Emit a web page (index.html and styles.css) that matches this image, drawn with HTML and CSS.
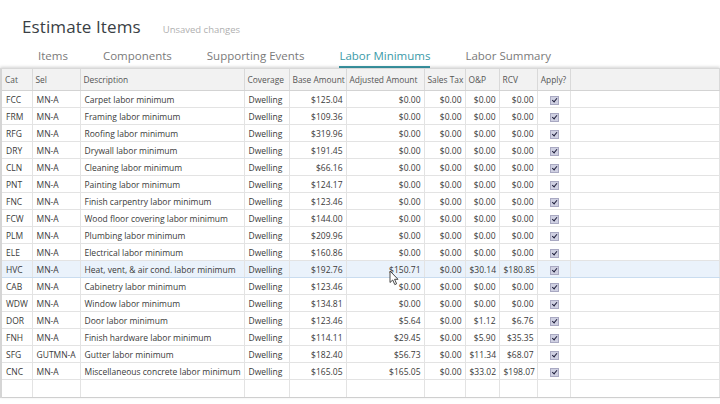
FILE: index.html
```html
<!DOCTYPE html>
<html lang="en">
<head>
    <meta charset="UTF-8" />
    <title>Estimate Items</title>
    <link rel="stylesheet" href="styles.css">
</head>
<body>

<header class="top">
    <h1>Estimate Items</h1>
    <span class="unsaved">Unsaved changes</span>
</header>

<nav class="tabs">
    <a>Items</a>
    <a>Components</a>
    <a>Supporting Events</a>
    <a class="active">Labor Minimums</a>
    <a>Labor Summary</a>
</nav>

<div class="grid-wrap">
    <table class="grid">
        <colgroup>
            <col style="width:31px">
            <col style="width:48px">
            <col style="width:164px">
            <col style="width:45px">
            <col style="width:57px">
            <col style="width:78px">
            <col style="width:41px">
            <col style="width:34px">
            <col style="width:38px">
            <col style="width:33px">
            <col>
        </colgroup>
        <tr>
            <th>Cat</th>
            <th>Sel</th>
            <th>Description</th>
            <th>Coverage</th>
            <th>Base Amount</th>
            <th>Adjusted Amount</th>
            <th>Sales Tax</th>
            <th>O&amp;P</th>
            <th>RCV</th>
            <th class="c">Apply?</th>
            <th></th>
        </tr>
        <tr><td>FCC</td><td>MN-A</td><td>Carpet labor minimum</td><td>Dwelling</td><td class="n">$125.04</td><td class="n">$0.00</td><td class="n">$0.00</td><td class="n">$0.00</td><td class="n">$0.00</td><td class="c"><span class="chk"></span></td><td></td></tr>
        <tr><td>FRM</td><td>MN-A</td><td>Framing labor minimum</td><td>Dwelling</td><td class="n">$109.36</td><td class="n">$0.00</td><td class="n">$0.00</td><td class="n">$0.00</td><td class="n">$0.00</td><td class="c"><span class="chk"></span></td><td></td></tr>
        <tr><td>RFG</td><td>MN-A</td><td>Roofing labor minimum</td><td>Dwelling</td><td class="n">$319.96</td><td class="n">$0.00</td><td class="n">$0.00</td><td class="n">$0.00</td><td class="n">$0.00</td><td class="c"><span class="chk"></span></td><td></td></tr>
        <tr><td>DRY</td><td>MN-A</td><td>Drywall labor minimum</td><td>Dwelling</td><td class="n">$191.45</td><td class="n">$0.00</td><td class="n">$0.00</td><td class="n">$0.00</td><td class="n">$0.00</td><td class="c"><span class="chk"></span></td><td></td></tr>
        <tr><td>CLN</td><td>MN-A</td><td>Cleaning labor minimum</td><td>Dwelling</td><td class="n">$66.16</td><td class="n">$0.00</td><td class="n">$0.00</td><td class="n">$0.00</td><td class="n">$0.00</td><td class="c"><span class="chk"></span></td><td></td></tr>
        <tr><td>PNT</td><td>MN-A</td><td>Painting labor minimum</td><td>Dwelling</td><td class="n">$124.17</td><td class="n">$0.00</td><td class="n">$0.00</td><td class="n">$0.00</td><td class="n">$0.00</td><td class="c"><span class="chk"></span></td><td></td></tr>
        <tr><td>FNC</td><td>MN-A</td><td>Finish carpentry labor minimum</td><td>Dwelling</td><td class="n">$123.46</td><td class="n">$0.00</td><td class="n">$0.00</td><td class="n">$0.00</td><td class="n">$0.00</td><td class="c"><span class="chk"></span></td><td></td></tr>
        <tr><td>FCW</td><td>MN-A</td><td>Wood floor covering labor minimum</td><td>Dwelling</td><td class="n">$144.00</td><td class="n">$0.00</td><td class="n">$0.00</td><td class="n">$0.00</td><td class="n">$0.00</td><td class="c"><span class="chk"></span></td><td></td></tr>
        <tr><td>PLM</td><td>MN-A</td><td>Plumbing labor minimum</td><td>Dwelling</td><td class="n">$209.96</td><td class="n">$0.00</td><td class="n">$0.00</td><td class="n">$0.00</td><td class="n">$0.00</td><td class="c"><span class="chk"></span></td><td></td></tr>
        <tr><td>ELE</td><td>MN-A</td><td>Electrical labor minimum</td><td>Dwelling</td><td class="n">$160.86</td><td class="n">$0.00</td><td class="n">$0.00</td><td class="n">$0.00</td><td class="n">$0.00</td><td class="c"><span class="chk"></span></td><td></td></tr>
        <tr class="sel"><td>HVC</td><td>MN-A</td><td>Heat, vent, &amp; air cond. labor minimum</td><td>Dwelling</td><td class="n">$192.76</td><td class="n">$150.71</td><td class="n">$0.00</td><td class="n">$30.14</td><td class="n">$180.85</td><td class="c"><span class="chk"></span></td><td></td></tr>
        <tr><td>CAB</td><td>MN-A</td><td>Cabinetry labor minimum</td><td>Dwelling</td><td class="n">$123.46</td><td class="n">$0.00</td><td class="n">$0.00</td><td class="n">$0.00</td><td class="n">$0.00</td><td class="c"><span class="chk"></span></td><td></td></tr>
        <tr><td>WDW</td><td>MN-A</td><td>Window labor minimum</td><td>Dwelling</td><td class="n">$134.81</td><td class="n">$0.00</td><td class="n">$0.00</td><td class="n">$0.00</td><td class="n">$0.00</td><td class="c"><span class="chk"></span></td><td></td></tr>
        <tr><td>DOR</td><td>MN-A</td><td>Door labor minimum</td><td>Dwelling</td><td class="n">$123.46</td><td class="n">$5.64</td><td class="n">$0.00</td><td class="n">$1.12</td><td class="n">$6.76</td><td class="c"><span class="chk"></span></td><td></td></tr>
        <tr><td>FNH</td><td>MN-A</td><td>Finish hardware labor minimum</td><td>Dwelling</td><td class="n">$114.11</td><td class="n">$29.45</td><td class="n">$0.00</td><td class="n">$5.90</td><td class="n">$35.35</td><td class="c"><span class="chk"></span></td><td></td></tr>
        <tr><td>SFG</td><td>GUTMN-A</td><td>Gutter labor minimum</td><td>Dwelling</td><td class="n">$182.40</td><td class="n">$56.73</td><td class="n">$0.00</td><td class="n">$11.34</td><td class="n">$68.07</td><td class="c"><span class="chk"></span></td><td></td></tr>
        <tr><td>CNC</td><td>MN-A</td><td>Miscellaneous concrete labor minimum</td><td>Dwelling</td><td class="n">$165.05</td><td class="n">$165.05</td><td class="n">$0.00</td><td class="n">$33.02</td><td class="n">$198.07</td><td class="c"><span class="chk"></span></td><td></td></tr>
        <tr class="blank"><td></td><td></td><td></td><td></td><td></td><td></td><td></td><td></td><td></td><td></td><td></td></tr>
    </table>

    <!-- mouse pointer over the HVC row -->
    <svg class="cursor" width="10" height="16" viewBox="0 0 10 16">
        <path d="M1 1 L1 12.5 L3.7 10 L5.8 14.6 L7.6 13.8 L5.6 9.3 L9 9.3 Z" fill="#fff" stroke="#333" stroke-width="0.9"/>
    </svg>
</div>

</body>
</html>
```

FILE: styles.css
```css
body {
    margin:0;
    background:#fff;
    font-family:"Open Sans", "Noto Sans", sans-serif;
    color:#333;
    width:720px;
    height:404px;
    overflow:hidden;
}

.top {
    display:flex;
    align-items:baseline;
    gap:22px;
    padding:15px 0 0 22px;
    height:28px;
}

.top h1 {
    margin:0;
    font-size:17px;
    font-weight:400;
    color:#3a3f45;
    letter-spacing:0.1px;
}

.unsaved {
    font-size:9.5px;
    color:#b0b0b0;
}

.tabs {
    display:flex;
    gap:35px;
    padding:6px 0 0 38px;
    height:25px;
    box-sizing:border-box;
}

.tabs a {
    font-size:11.5px;
    color:#7a7a7a;
    line-height:14px;
    padding-bottom:3px;
    border-bottom:2px solid transparent;
    cursor:pointer;
}

.tabs a.active {
    color:#3b9aa8;
    border-bottom-color:#3b9aa8;
}

/* grid */
.grid-wrap {
    position:relative;
    box-shadow:0 -1px 3px rgba(0,0,0,0.18);
    border-top:1px solid #d8d8d8;
}

.grid {
    width:720px;
    border-collapse:collapse;
    table-layout:fixed;
    font-size:8.5px;
}

.grid th {
    background:#f2f2f2;
    color:#555;
    font-size:8.4px;
    font-weight:400;
    text-align:left;
    height:21px;
    padding:0 3px;
    border-right:1px solid #d9d9d9;
    border-bottom:1px solid #d3d3d3;
    white-space:nowrap;
    overflow:hidden;
}

.grid td {
    height:16px;
    padding:0 3px 0 4px;
    border-right:1px solid #e3e3e3;
    border-bottom:1px solid #e3e3e3;
    white-space:nowrap;
    overflow:hidden;
    color:#3a3a3a;
}

.grid th:first-child,
.grid td:first-child {
    border-left:2px solid #d5d5d5;
}

.grid .n {
    text-align:right;
    padding-right:3px;
}

.grid .c {
    text-align:center;
}

.grid tr.sel td {
    background:#eaf2fb;
    border-top:1px solid #c9dcef;
    border-bottom:1px solid #c9dcef;
}

.grid tr.blank td {
    height:17px;
    border-bottom:1px solid #cfcfcf;
}

.chk {
    display:inline-block;
    width:9px;
    height:9px;
    box-sizing:border-box;
    border:1px solid #a9a9c2;
    background:#cfd0e2;
    vertical-align:middle;
    position:relative;
}

.chk::after {
    content:"";
    position:absolute;
    left:2.6px;
    top:0.6px;
    width:2px;
    height:4.4px;
    border:solid #1d1d3a;
    border-width:0 1.4px 1.4px 0;
    transform:rotate(40deg);
}

.cursor {
    position:absolute;
    left:389px;
    top:201px;
}
```
